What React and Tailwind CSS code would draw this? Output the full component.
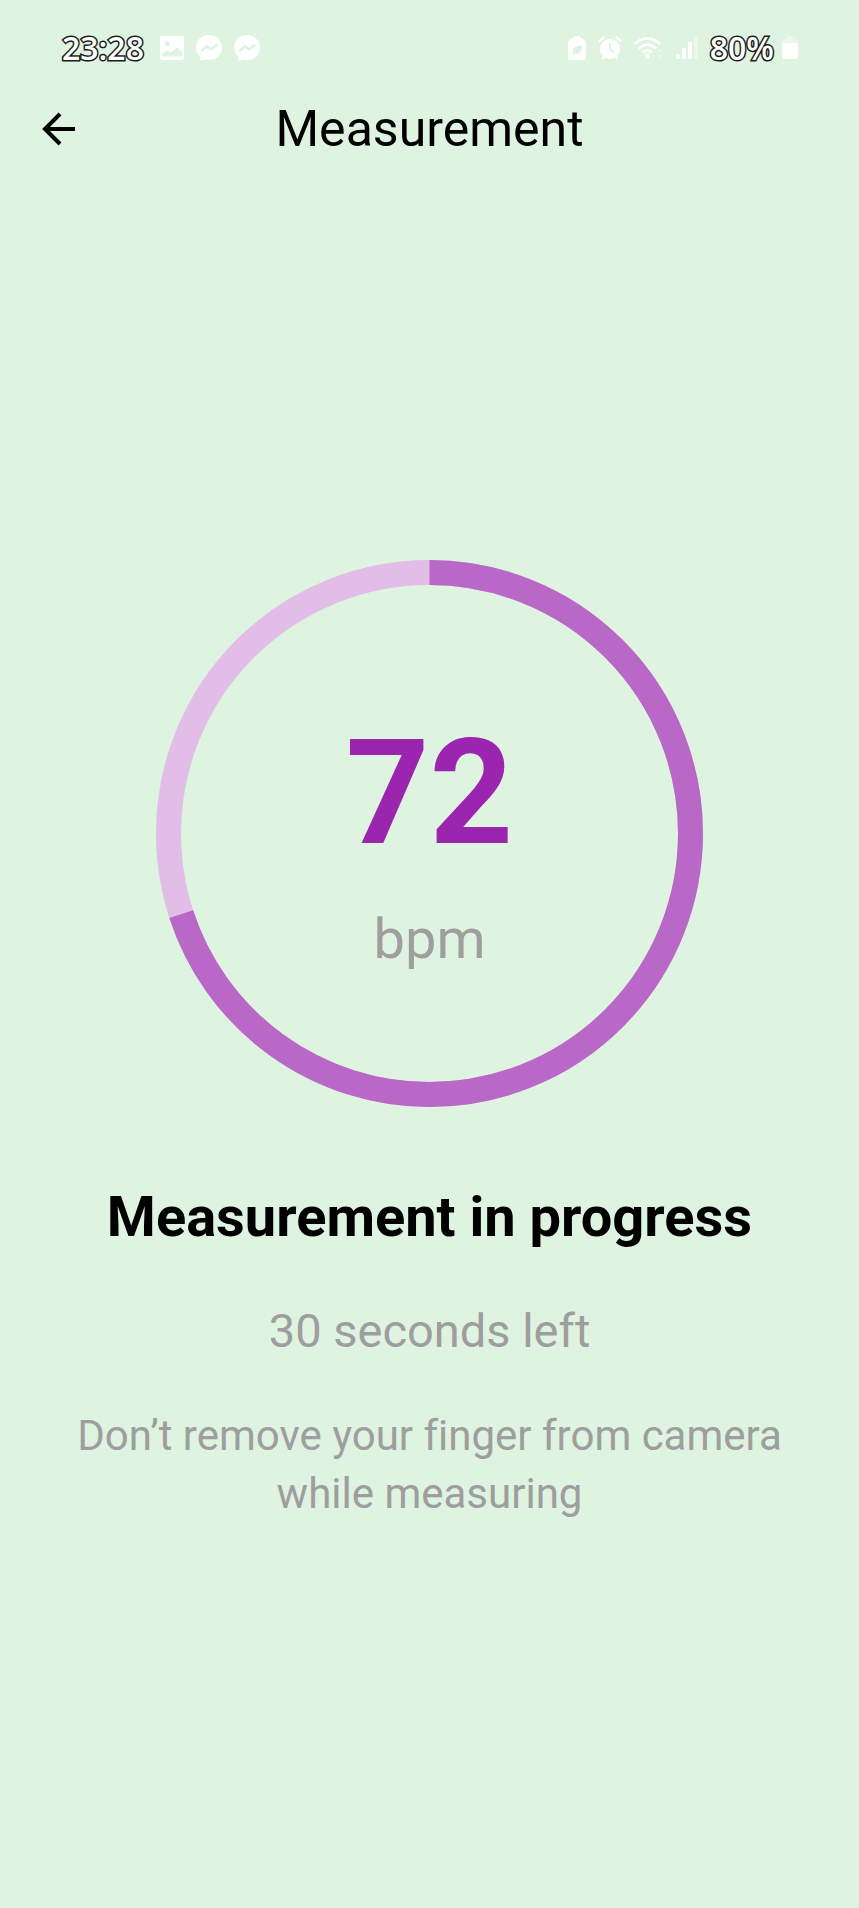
import React from "react";

const TOTAL_ARC = 100;

function PictureIcon() {
  return (
    <svg viewBox="0 0 24 24" className="size-6" aria-hidden="true">
      <path fill="#fff" fillRule="evenodd" d="M2 0h20a2 2 0 0 1 2 2v20a2 2 0 0 1-2 2H2a2 2 0 0 1-2-2V2a2 2 0 0 1 2-2Zm5 5a2.500 2.500 0 1 0 0 5 2.500 2.500 0 0 0 0-5ZM2 20.500h20V16l-5-4.500-6 5-4-2-5 3.500Z" />
    </svg>
  );
}

function MessengerIcon() {
  return (
    <svg viewBox="0 0 26 26" className="size-[26px]" aria-hidden="true">
      <path fill="#fff" d="M13 0c7.300 0 13 5.400 13 12.500S20.300 25 13 25c-1.300 0-2.500-.2-3.700-.5L4 26l.3-4.300C1.600 19.400 0 16.200 0 12.500 0 5.400 5.700 0 13 0Z" />
      <path fill="none" stroke="#dff3e1" strokeWidth="2.400" strokeLinejoin="round" strokeLinecap="round" d="m6 15.500 5-4.500 4 3.500 5.500-4.500" />
    </svg>
  );
}

function BatterySaverIcon() {
  return (
    <svg viewBox="0 0 18 24" className="h-6 w-[18px]" aria-hidden="true">
      <path fill="#fff" fillRule="evenodd" d="M6 0h6v2h2l4 3.500V22a2 2 0 0 1-2 2H2a2 2 0 0 1-2-2V5.500L4 2h2ZM14 9.500c-5 0-9 1.200-9 5 0 .8.300 1.500.7 2L4 18.300l1 1 2-1.700c4.500 1 7-2.600 7-8.100Z" />
    </svg>
  );
}

function AlarmIcon() {
  return (
    <svg viewBox="0 0 24 24" className="size-6" aria-hidden="true">
      <path fill="none" stroke="#fff" strokeWidth="2.500" strokeLinecap="round" d="M1.500 5 5.500 1.500M22.500 5l-4-3.500M5 22l2-3M19 22l-2-3" />
      <circle cx="12" cy="13" r="10" fill="#fff" />
      <path fill="none" stroke="#dff3e1" strokeWidth="2" d="M12 7v6.500l4 2.500" />
    </svg>
  );
}

function WifiIcon() {
  return (
    <svg viewBox="0 0 30 24" className="h-6 w-[30px]" aria-hidden="true">
      <g fill="none" stroke="#fff" strokeWidth="2.500" strokeLinecap="round">
        <path d="M1.500 7.500C8 .7 19 .7 25.500 7.500" />
        <path d="M5.500 12c4.500-4.500 11.500-4.500 16 0" />
        <path d="M9.500 16c2.300-2.200 5.700-2.200 8 0" />
      </g>
      <circle cx="13.500" cy="20" r="2.500" fill="#fff" />
      <path fill="#fff" opacity=".4" d="m26 13 2.500 3h-5ZM26 22l2.500-3h-5Z" />
    </svg>
  );
}

function SignalIcon() {
  return (
    <svg viewBox="0 0 22 24" className="h-6 w-[22px]" aria-hidden="true">
      <g fill="#fff">
        <rect x="0" y="18" width="4" height="5" rx="1" />
        <rect x="6" y="12" width="4" height="11" rx="1" />
        <rect x="12" y="6" width="4" height="17" rx="1" />
        <rect x="18" y="0" width="4" height="23" rx="1" opacity=".35" />
      </g>
    </svg>
  );
}

function BatteryIcon() {
  return (
    <svg viewBox="0 0 16 24" className="h-6 w-4" aria-hidden="true">
      <path fill="#fff" opacity=".4" d="M5 0h6v3h2a3 3 0 0 1 3 3v3H0V6a3 3 0 0 1 3-3h2Z" />
      <path fill="#fff" d="M0 7h16v14a2 2 0 0 1-2 2H2a2 2 0 0 1-2-2Z" />
    </svg>
  );
}

function StatusText({ children }) {
  return (
    <span className="font-['Open_Sans','Noto_Sans',sans-serif] text-[32px] leading-10 font-semibold text-white [-webkit-text-stroke:3px_#1c1c1c] [paint-order:stroke_fill]">
      {children}
    </span>
  );
}

function StatusBar() {
  return (
    <div className="flex h-24 items-center justify-between pr-[61px] pl-[62px]">
      <div className="flex items-center gap-4">
        <StatusText>23:28</StatusText>
        <div className="flex items-center gap-3">
          <PictureIcon />
          <MessengerIcon />
          <MessengerIcon />
        </div>
      </div>
      <div className="flex items-center gap-3">
        <div className="flex items-center gap-3">
          <BatterySaverIcon />
          <AlarmIcon />
          <WifiIcon />
          <SignalIcon />
        </div>
        <div className="flex items-center gap-2">
          <StatusText>80%</StatusText>
          <BatteryIcon />
        </div>
      </div>
    </div>
  );
}

function AppHeader() {
  return (
    <header className="grid h-[66px] grid-cols-[64px_1fr_64px] items-center px-7">
      <button type="button" aria-label="Back" className="flex size-16 items-center justify-start">
        <svg viewBox="0 0 60 60" className="size-[60px]" fill="none" stroke="#000" strokeWidth="4" aria-hidden="true">
          <path d="M47 30H17M32 15 17 30l15 15" />
        </svg>
      </button>
      <h1 className="text-center text-[50px] leading-16 text-black">Measurement</h1>
    </header>
  );
}

function HeartRateDial({ bpm, progress }) {
  return (
    <div className="grid size-[547px] max-w-full">
      <svg
        viewBox="0 0 547 547"
        className="col-start-1 row-start-1 size-full"
        fill="none"
        strokeWidth="25"
        role="img"
        aria-label="Measurement progress"
      >
        <circle cx="273.5" cy="273.5" r="261" stroke="#e1bde7" />
        <circle
          cx="273.5"
          cy="273.5"
          r="261"
          stroke="#b968c7"
          pathLength={TOTAL_ARC}
          strokeDasharray={`${progress} ${TOTAL_ARC}`}
          transform="rotate(-90 273.5 273.5)"
        />
      </svg>
      <div className="col-start-1 row-start-1 flex flex-col items-center gap-10 pt-[161px]">
        <span className="text-[146px] leading-[146px] font-bold text-[#9b25af]">{bpm}</span>
        <span className="text-[56px] leading-16 text-[#9e9e9e]">bpm</span>
      </div>
    </div>
  );
}

export default function App() {
  return (
    <div className="flex min-h-screen flex-col bg-[#dff3e1] font-[Roboto,sans-serif] [font-variant-ligatures:none]">
      <StatusBar />
      <AppHeader />
      <main className="flex flex-col items-center px-12 pt-[398px] pb-16 text-center">
        <HeartRateDial bpm={72} progress={70} />
        <h2 className="pt-[78px] text-[56px] leading-16 font-bold text-black">Measurement in progress</h2>
        <p className="pt-[50px] text-[47px] leading-16 text-[#9e9e9e]">30 seconds left</p>
        <p className="max-w-[740px] pt-11 text-[42px] leading-[58px] text-[#9e9e9e]">
          Don’t remove your finger from camera while measuring
        </p>
      </main>
    </div>
  );
}
